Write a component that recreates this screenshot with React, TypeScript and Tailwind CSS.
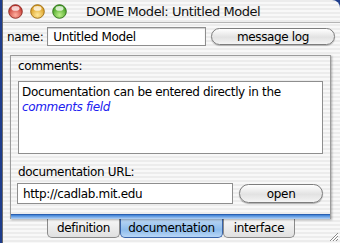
import React from "react";

const font = { fontFamily: '"DejaVu Sans", "Liberation Sans", sans-serif' };

function Light({ id, from, to, rim }: { id: string; from: string; to: string; rim: string }) {
  return (
    <svg width="15" height="15" viewBox="0 0 15 15">
      <defs>
        <radialGradient id={id} cx="50%" cy="75%" r="65%">
          <stop offset="0%" stopColor={to} />
          <stop offset="100%" stopColor={from} />
        </radialGradient>
      </defs>
      <circle cx="7.5" cy="7.5" r="6.8" fill={`url(#${id})`} stroke={rim} strokeWidth="0.9" />
      <ellipse cx="7.5" cy="4.4" rx="4" ry="2.4" fill="white" opacity="0.75" />
    </svg>
  );
}

const stripes =
  "bg-[repeating-linear-gradient(to_bottom,#ececec_0px,#ececec_2px,#f8f8f8_2px,#f8f8f8_4px)]";

export default function App() {
  return (
    <div
      className="w-[340px] h-[243px] overflow-hidden bg-[#1e3d8c] text-[12px] tracking-[-0.35px] text-black"
      style={font}
    >
      <div className="ml-[2px] h-full rounded-tr-[8px] border-l border-[#6b6b6b] bg-[repeating-linear-gradient(to_bottom,#ececec_0px,#ececec_2px,#f8f8f8_2px,#f8f8f8_4px)] flex flex-col relative">
        {/* title bar */}
        <div className="h-[23px] flex items-center pl-[5px] border-b border-[#b4b4b4]">
          <div className="flex gap-[7px]">
            <Light id="lr" from="#c4332c" to="#ffb0a0" rim="#8a2a22" />
            <Light id="ly" from="#d99a1a" to="#ffe89a" rim="#9a6a10" />
            <Light id="lg" from="#3f9e1f" to="#bff08a" rim="#2c6e16" />
          </div>
          <div className="ml-[19px] text-[13px] tracking-[-0.45px] leading-none text-[#111]">
            DOME Model: Untitled Model
          </div>
        </div>
        {/* name row */}
        <div className="flex items-center mt-[4px] pl-[4px] pr-[5px]">
          <span>name:</span>
          <div className="ml-[4px] w-[160px] h-[19px] bg-white border border-[#8e8e8e] shadow-[inset_0_1px_1px_rgba(0,0,0,0.2)] flex items-center pl-[5px]">
            Untitled Model
          </div>
          <div className="ml-[5px] w-[125px] h-[17px] rounded-full border border-[#7d7d7d] bg-[linear-gradient(to_bottom,#ffffff,#e2e2e2_55%,#f4f4f4)] shadow-[0_1px_1px_rgba(0,0,0,0.25)] flex items-center justify-center">
            message log
          </div>
        </div>
        {/* tab panel */}
        <div
          className={`mt-[9px] ml-[7px] w-[321px] h-[164px] border border-[#9b9b9b] border-b-0 shadow-[1px_1px_2px_rgba(0,0,0,0.3)] ${stripes} flex flex-col px-[7px] relative`}
        >
          <div className="mt-[3px] leading-[15px]">comments:</div>
          <div className="mt-[7px] h-[73px] bg-white border border-[#8e8e8e] px-[3px] pt-[3px] leading-[15px]">
            <div>Documentation can be entered directly in the</div>
            <div className="italic text-[#2020f0]">comments field</div>
          </div>
          <div className="mt-[11px] leading-[15px]">documentation URL:</div>
          <div className="mt-[3px] flex items-center">
            <div className="w-[217px] h-[21px] bg-white border border-[#8e8e8e] flex items-center pl-[5px] -ml-[1px]">
              http://cadlab.mit.edu
            </div>
            <div className="ml-[6px] w-[84px] h-[19px] rounded-full border border-[#7d7d7d] bg-[linear-gradient(to_bottom,#ffffff,#e2e2e2_55%,#f4f4f4)] shadow-[0_1px_1px_rgba(0,0,0,0.3)] flex items-center justify-center">
              open
            </div>
          </div>
          <div className="absolute left-0 right-0 bottom-0 h-[5px] bg-[linear-gradient(to_bottom,#3a7fd6,#b5d3f5)] border-t border-[#2a5fb0]" />
        </div>
        {/* tabs */}
        <div className="flex ml-[44px]">
          <div className="w-[73px] h-[19px] border border-t-0 border-[#8a8a8a] rounded-b-[5px] bg-[linear-gradient(to_bottom,#f7f7f7,#e0e0e0)] flex items-center justify-center">
            definition
          </div>
          <div className="w-[103px] h-[19px] border border-t-0 border-[#3a64a8] rounded-b-[5px] bg-[linear-gradient(to_bottom,#bcd7f4,#8dbcec_60%,#b8d6f6)] flex items-center justify-center">
            documentation
          </div>
          <div className="w-[72px] h-[19px] border border-t-0 border-[#8a8a8a] rounded-b-[5px] bg-[linear-gradient(to_bottom,#f7f7f7,#e0e0e0)] flex items-center justify-center">
            interface
          </div>
        </div>
        {/* resize grip */}
        <svg className="absolute right-[1px] bottom-[1px]" width="12" height="12" viewBox="0 0 12 12">
          <path d="M11 3 L3 11 M11 6 L6 11 M11 9 L9 11" stroke="#8a8a8a" strokeWidth="1" />
          <path d="M11 4 L4 11 M11 7 L7 11" stroke="#ffffff" strokeWidth="1" />
        </svg>
      </div>
    </div>
  );
}
